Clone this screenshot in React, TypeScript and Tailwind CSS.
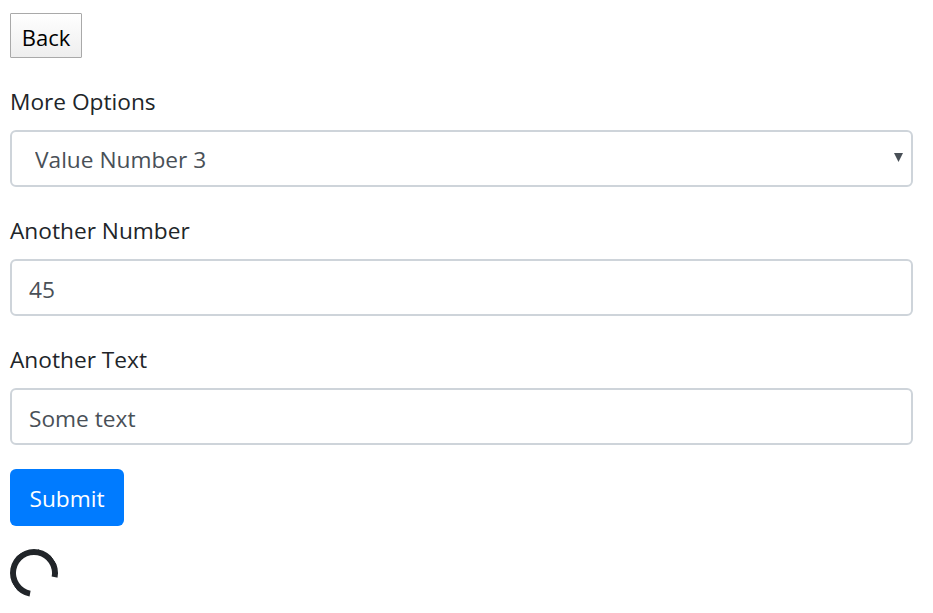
const labelCls = 'block text-[22.7px] leading-[38px] text-[#212529]';
const fieldCls =
  'block h-[57px] w-full rounded-[6px] border-2 border-[#ced4da] bg-white pt-[4px] text-[22.7px] text-[#495057] outline-none';

export default function App() {
  return (
    <div className="min-h-[613px] bg-white pl-[10px] pr-[20px] pt-[13px] font-['Open_Sans',sans-serif]">
      <button
        type="button"
        className="block h-[45px] w-[72px] rounded-[1px] border border-[#a9a9a9] bg-gradient-to-b from-white to-[#eeeeee] pt-[4px] text-[22px] text-black"
      >
        Back
      </button>

      <form className="mt-[25px]">
        <label className={labelCls}>More Options</label>
        <div className="relative mt-[9px]">
          <select defaultValue="3" className={`${fieldCls} appearance-none pl-[23px]`}>
            <option value="1">Value Number 1</option>
            <option value="2">Value Number 2</option>
            <option value="3">Value Number 3</option>
          </select>
          <svg
            className="pointer-events-none absolute right-[10px] top-[23px] h-[9px] w-[9px]"
            viewBox="0 0 9 9"
          >
            <path d="M0 0H9L4.5 9Z" fill="#495057" />
          </svg>
        </div>

        <label className={`${labelCls} mt-[25px]`}>Another Number</label>
        <input type="text" defaultValue="45" className={`${fieldCls} mt-[9px] px-[17px]`} />

        <label className={`${labelCls} mt-[25px]`}>Another Text</label>
        <input type="text" defaultValue="Some text" className={`${fieldCls} mt-[9px] px-[17px]`} />

        <button
          type="submit"
          className="mt-[24px] block h-[57px] w-[114px] rounded-[6px] bg-[#007bff] pt-[4px] text-[22.7px] text-white"
        >
          Submit
        </button>
      </form>

      <div className="mt-[23px] h-[48px] w-[48px] rotate-[56deg] rounded-full border-[6px] border-[#212529] border-r-transparent" />
    </div>
  );
}
